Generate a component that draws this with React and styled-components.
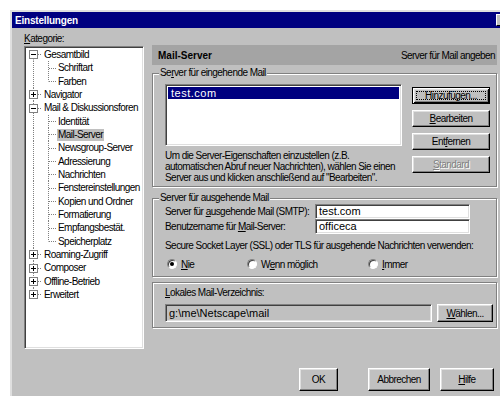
import React from 'react';
import styled, { createGlobalStyle, css } from 'styled-components';

const GlobalStyle = createGlobalStyle`
  html, body {
    margin: 0;
    padding: 0;
    background: #fff;
    overflow: hidden;
  }
  body {
    font-family: "Liberation Sans", Arial, sans-serif;
    font-size: 10px;
    letter-spacing: -0.55px;
    color: #000;
  }
`;

//#region Window
const Window = styled.div`
  margin: 10px 0 0 10px;
  width: 500px;
  height: 386px;
  border: 2px solid;
  border-color: #dfdfdf #404040 #404040 #dfdfdf;
  background: #c0c0c0;
`;

const TitleBar = styled.div`
  height: 16px;
  background: #000080;
  color: #fff;
  display: flex;
  align-items: center;
  justify-content: space-between;
  padding-left: 3px;
  font-weight: bold;
  letter-spacing: -0.2px;
`;

const CloseBox = styled.span`
  width: 14px;
  height: 12px;
  margin-right: 2px;
  box-sizing: border-box;
  background: #c0c0c0;
  border: 1px solid;
  border-color: #fff #000 #000 #fff;
  color: #000;
  font-size: 10px;
  line-height: 9px;
  text-align: center;
  letter-spacing: 0;
`;

const Content = styled.div`
  display: flex;
  gap: 8px;
  padding: 4px 0 0 12px;
`;
//#endregion

//#region Tree
const LeftCol = styled.div`
  width: 120px;
  flex: none;
`;

const Label = styled.div`
  line-height: 14px;
  height: 14px;
`;

const sunken = css`
  box-sizing: border-box;
  border: 1px solid;
  border-color: #808080 #fff #fff #808080;
  box-shadow: inset 1px 1px #404040, inset -1px -1px #dfdfdf;
`;

const TreeBox = styled.div`
  ${sunken};
  height: 303px;
  background: #fff;
  padding: 1px;
`;

const TreeRow = styled.div`
  display: flex;
  align-items: center;
  height: ${({ $h }) => $h}px;
  white-space: nowrap;
`;

const TreeLabel = styled.span`
  line-height: 12px;
  padding: 0 1px;
  margin-left: ${({ $child }) => ($child ? 0 : 1)}px;
  background: ${({ $selected }) => ($selected ? '#c0c0c0' : 'transparent')};
`;
//#endregion

//#region Right panel
const RightCol = styled.div`
  width: 345px;
  flex: none;
  display: flex;
  flex-direction: column;
  padding-top: 13px;
`;

const HeaderBar = styled.div`
  height: 20px;
  background: #a4a4a4;
  display: flex;
  align-items: center;
  justify-content: space-between;
  padding: 0 2px 0 6px;
  strong {
    letter-spacing: 0;
  }
`;

const etched = css`
  border: 1px solid #808080;
  box-shadow: inset 1px 1px #fff, 1px 1px #fff;
`;

const Group = styled.fieldset`
  ${etched};
  margin: ${({ $top }) => $top}px 0 0 0;
  min-width: 0;
  padding: ${({ $pad }) => $pad};
  legend {
    padding: 0 1px;
    margin-left: -6px;
    line-height: 12px;
    background: #c0c0c0;
  }
`;

const PlainGroup = styled.div`
  ${etched};
  margin-top: 5px;
  padding: 4px 3px 5px 12px;
`;

const IncomingGrid = styled.div`
  display: grid;
  grid-template-columns: 237px 78px;
  column-gap: 10px;
`;

const ListBox = styled.div`
  ${sunken};
  height: 62px;
  background: #fff;
  padding: 2px;
`;

const ListItem = styled.div`
  height: 12px;
  line-height: 12px;
  padding-left: 3px;
  background: ${({ $selected }) => ($selected ? '#000080' : 'transparent')};
  color: ${({ $selected }) => ($selected ? '#fff' : '#000')};
  font-size: 11px;
  letter-spacing: 0.5px;
`;

const Note = styled.p`
  margin: 4px 0 0 0;
  line-height: 11px;
`;

const ButtonStack = styled.div`
  display: flex;
  flex-direction: column;
  gap: 6px;
  padding-top: 3px;
`;

const Button = styled.button`
  box-sizing: border-box;
  width: ${({ $w }) => ($w ? `${$w}px` : '100%')};
  height: ${({ $h }) => $h || 17}px;
  padding: 0;
  margin: 0;
  font: inherit;
  letter-spacing: inherit;
  background: #c0c0c0;
  color: #000;
  display: flex;
  align-items: center;
  justify-content: center;
  border: 1px solid;
  border-color: #fff #000 #000 #fff;
  box-shadow: inset -1px -1px #808080, inset 1px 1px #dfdfdf;
  ${({ $default }) =>
    $default &&
    css`
      border-color: #000;
      box-shadow: inset 1px 1px #fff, inset -1px -1px #000, inset 2px 2px #dfdfdf,
        inset -2px -2px #808080;
    `}
  ${({ disabled }) =>
    disabled &&
    css`
      color: #808080;
      text-shadow: 1px 1px #fff;
    `}
`;

const FocusRing = styled.span`
  flex: 1;
  align-self: stretch;
  margin: 3px;
  border: 1px dotted #000;
  display: flex;
  align-items: center;
  justify-content: center;
`;

const FieldRow = styled.div`
  display: grid;
  grid-template-columns: 150px 155px;
  height: 15px;
  align-items: center;
  white-space: nowrap;
`;

const TextField = styled.div`
  ${sunken};
  width: ${({ $w }) => ($w ? `${$w}px` : 'auto')};
  height: ${({ $h }) => $h || 15}px;
  line-height: ${({ $h }) => ($h || 15) - 2}px;
  background: ${({ $readOnly }) => ($readOnly ? '#c0c0c0' : '#fff')};
  padding: 0 3px;
  font-size: 11px;
  letter-spacing: 0;
  white-space: nowrap;
`;

const Line = styled.div`
  line-height: 12px;
  margin-top: ${({ $top }) => $top || 0}px;
  white-space: nowrap;
`;

const RadioRow = styled.div`
  display: grid;
  grid-template-columns: 80px 121px auto;
  margin: 6px 0 0 2px;
  height: 12px;
`;

const RadioOption = styled.label`
  display: flex;
  align-items: center;
  gap: 4px;
`;

const RadioDot = styled.span`
  box-sizing: border-box;
  width: 10px;
  height: 10px;
  border-radius: 50%;
  background: #fff;
  border: 1px solid;
  border-color: #808080 #fff #fff #808080;
  box-shadow: inset 1px 1px #404040;
  display: flex;
  align-items: center;
  justify-content: center;
  &::after {
    content: '';
    width: 4px;
    height: 4px;
    border-radius: 50%;
    background: #000;
    display: ${({ $checked }) => ($checked ? 'block' : 'none')};
  }
`;

const PathRow = styled.div`
  display: flex;
  gap: 5px;
  margin-top: 5px;
`;

const Footer = styled.div`
  display: flex;
  justify-content: flex-end;
  margin-top: 40px;
  padding-right: 3px;
  gap: 10px;
  button:first-child {
    margin-right: 20px;
  }
`;
//#endregion

const tree = [
  { label: 'Gesamtbild', open: true, children: ['Schriftart', 'Farben'] },
  { label: 'Navigator' },
  {
    label: 'Mail & Diskussionsforen',
    open: true,
    children: [
      'Identität',
      'Mail-Server',
      'Newsgroup-Server',
      'Adressierung',
      'Nachrichten',
      'Fenstereinstellungen',
      'Kopien und Ordner',
      'Formatierung',
      'Empfangsbestät.',
      'Speicherplatz',
    ],
  },
  { label: 'Roaming-Zugriff' },
  { label: 'Composer' },
  { label: 'Offline-Betrieb' },
  { label: 'Erweitert' },
];

const DOT = '#808080';

const TopLines = ({ h, first, last, open }) => {
  const mid = Math.floor(h / 2) + 0.5;
  return (
    <svg width="16" height={h} style={{ flex: 'none' }}>
      <line x1="7.5" y1={first ? mid : 0} x2="7.5" y2={last ? mid : h} stroke={DOT} strokeDasharray="1 1" />
      <line x1="12" y1={mid} x2="16" y2={mid} stroke={DOT} strokeDasharray="1 1" />
      <rect x="3.5" y={mid - 4} width="8" height="8" fill="#fff" stroke={DOT} />
      <line x1="5" y1={mid} x2="10" y2={mid} stroke="#000" />
      {!open && <line x1="7.5" y1={mid - 2.5} x2="7.5" y2={mid + 2.5} stroke="#000" />}
    </svg>
  );
};

const ChildLines = ({ h, last }) => {
  const mid = Math.floor(h / 2) + 0.5;
  return (
    <svg width="31" height={h} style={{ flex: 'none' }}>
      <line x1="7.5" y1="0" x2="7.5" y2={h} stroke={DOT} strokeDasharray="1 1" />
      <line x1="22.5" y1="0" x2="22.5" y2={last ? mid : h} stroke={DOT} strokeDasharray="1 1" />
      <line x1="23" y1={mid} x2="30" y2={mid} stroke={DOT} strokeDasharray="1 1" />
    </svg>
  );
};

const buildRows = () => {
  const rows = [];
  tree.forEach((node, i) => {
    rows.push({ type: 'top', node, first: i === 0, last: i === tree.length - 1 });
    if (node.open) {
      node.children.forEach((c, j) =>
        rows.push({ type: 'child', label: c, last: j === node.children.length - 1 })
      );
    }
  });
  return rows;
};

const Tree = () => {
  const rows = buildRows();
  return (
    <TreeBox>
      {rows.map((r, i) => {
        const h = Math.round(((i + 1) * 40) / 3) - Math.round((i * 40) / 3);
        if (r.type === 'top') {
          return (
            <TreeRow key={i} $h={h}>
              <TopLines h={h} first={r.first} last={r.last} open={r.node.open} />
              <TreeLabel>{r.node.label}</TreeLabel>
            </TreeRow>
          );
        }
        return (
          <TreeRow key={i} $h={h}>
            <ChildLines h={h} last={r.last} />
            <TreeLabel $child $selected={r.label === 'Mail-Server'}>
              {r.label}
            </TreeLabel>
          </TreeRow>
        );
      })}
    </TreeBox>
  );
};

const Radio = ({ checked, children }) => (
  <RadioOption>
    <RadioDot $checked={checked} />
    <span>{children}</span>
  </RadioOption>
);

export default function App() {
  return (
    <>
      <GlobalStyle />
      <Window>
        <TitleBar>
          <span>Einstellungen</span>
          <CloseBox>×</CloseBox>
        </TitleBar>
        <Content>
          <LeftCol>
            <Label>
              <u>K</u>ategorie:
            </Label>
            <Tree />
          </LeftCol>

          <RightCol>
            <HeaderBar>
              <strong>Mail-Server</strong>
              <span>Server für Mail angeben</span>
            </HeaderBar>

            <Group $top={2} $pad="5px 6px 3px 12px">
              <legend>
                Se<u>r</u>ver für eingehende Mail
              </legend>
              <IncomingGrid>
                <div>
                  <ListBox>
                    <ListItem $selected>test.com</ListItem>
                  </ListBox>
                  <Note>
                    Um die Server-Eigenschaften einzustellen (z.B.
                    <br />
                    automatischen Abruf neuer Nachrichten), wählen Sie einen
                    <br />
                    Server aus und klicken anschließend auf "Bearbeiten".
                  </Note>
                </div>
                <ButtonStack>
                  <Button $default>
                    <FocusRing>Hinzufügen...</FocusRing>
                  </Button>
                  <Button>
                    <span>
                      <u>B</u>earbeiten
                    </span>
                  </Button>
                  <Button>
                    <span>
                      Ent<u>f</u>ernen
                    </span>
                  </Button>
                  <Button disabled>
                    <span>
                      <u>S</u>tandard
                    </span>
                  </Button>
                </ButtonStack>
              </IncomingGrid>
            </Group>

            <Group $top={5} $pad="0 6px 6px 12px">
              <legend>Server für ausgehende Mail</legend>
              <FieldRow>
                <span>
                  Server für <u>a</u>usgehende Mail (SMTP):
                </span>
                <TextField>test.com</TextField>
              </FieldRow>
              <FieldRow>
                <span>
                  Benutzername für <u>M</u>ail-Server:
                </span>
                <TextField>officeca</TextField>
              </FieldRow>
              <Line $top={6}>Secure Socket Layer (SSL) oder TLS für ausgehende Nachrichten verwenden:</Line>
              <RadioRow>
                <Radio checked>
                  <u>N</u>ie
                </Radio>
                <Radio>
                  W<u>e</u>nn möglich
                </Radio>
                <Radio>
                  <u>I</u>mmer
                </Radio>
              </RadioRow>
            </Group>

            <PlainGroup>
              <Line>
                <u>L</u>okales Mail-Verzeichnis:
              </Line>
              <PathRow>
                <TextField $readOnly $w={268} $h={18}>
                  g:\me\Netscape\mail
                </TextField>
                <Button $w={56} $h={18}>
                  <span>
                    <u>W</u>ählen...
                  </span>
                </Button>
              </PathRow>
            </PlainGroup>

            <Footer>
              <Button $w={39} $h={23}>
                OK
              </Button>
              <Button $w={62} $h={23}>
                Abbrechen
              </Button>
              <Button $w={54} $h={23}>
                <span>
                  <u>H</u>ilfe
                </span>
              </Button>
            </Footer>
          </RightCol>
        </Content>
      </Window>
    </>
  );
}
